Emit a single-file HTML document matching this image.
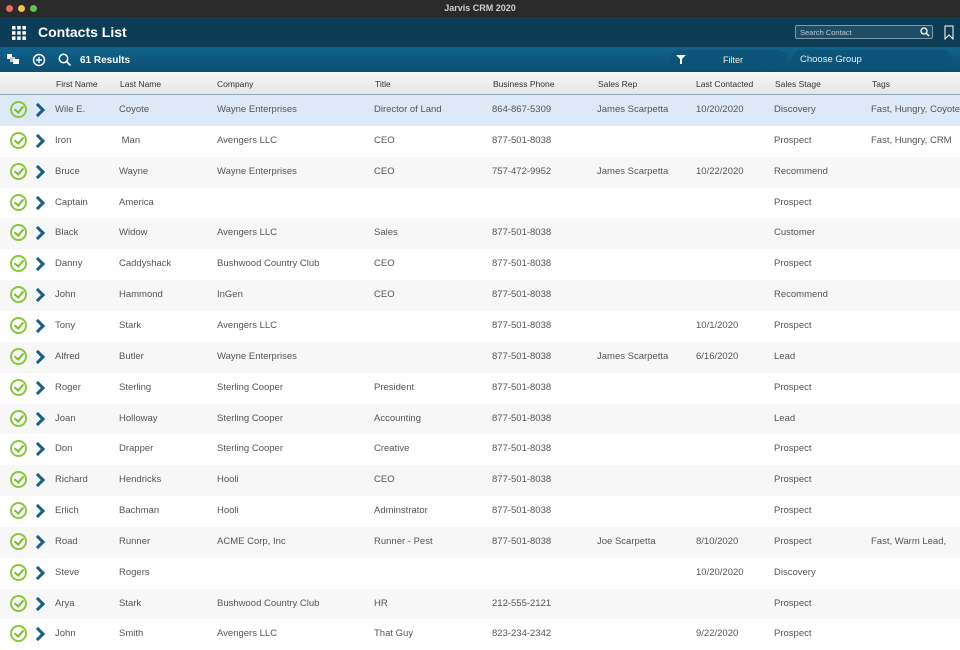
<html><head><style>
body{margin:0;width:960px;height:634px;overflow:hidden;font-family:"Liberation Sans",sans-serif;background:#fff;position:relative}
.tb{position:absolute;top:0;left:0;width:960px;height:17px;background:#2a2a2a;color:#cfcfcf;font-size:9px;font-weight:bold;text-align:center;line-height:17px}
.dot{position:absolute;top:5px;width:7px;height:7px;border-radius:50%}
.hd{position:absolute;top:17px;left:0;width:960px;height:30px;background:#0c3c56}
.tl{position:absolute;top:47px;left:0;width:960px;height:25px;background:linear-gradient(#11628a,#0b4f72)}
.ch{position:absolute;top:72px;left:0;width:960px;height:22px;background:linear-gradient(#f6f6f6,#e6e6e6);border-bottom:1px solid #9aa7b0;font-size:8.5px;color:#333}
.ch span,.r span{position:absolute}
.ch span{top:7px}
.r{position:absolute;left:0;width:960px;height:30.85px;font-size:9.5px;color:#555}
.r span{top:9px;white-space:nowrap}
.ck{position:absolute;left:10px;top:6px;width:13px;height:13px;border:2px solid #8cc63f;border-radius:50%}
.ck:after{content:"";position:absolute;left:4px;top:1px;width:4px;height:7px;border:solid #7cbb2f;border-width:0 2px 2px 0;transform:rotate(40deg)}
.cv{position:absolute;left:33px;top:10px;width:7px;height:7px;border:solid #1a5f86;border-width:3px 3px 0 0;transform:rotate(45deg)}
</style></head><body>
<div class="tb">Jarvis CRM 2020
<div class="dot" style="left:6px;background:#ed6a5e"></div><div class="dot" style="left:18px;background:#f5bf4f"></div><div class="dot" style="left:30px;background:#61c454"></div></div>
<div class="hd">
<svg style="position:absolute;left:12px;top:9px" width="14" height="14"><g fill="#fff"><rect x="0" y="0" width="3.5" height="3.5"/><rect x="5.2" y="0" width="3.5" height="3.5"/><rect x="10.4" y="0" width="3.5" height="3.5"/><rect x="0" y="5.2" width="3.5" height="3.5"/><rect x="5.2" y="5.2" width="3.5" height="3.5"/><rect x="10.4" y="5.2" width="3.5" height="3.5"/><rect x="0" y="10.4" width="3.5" height="3.5"/><rect x="5.2" y="10.4" width="3.5" height="3.5"/><rect x="10.4" y="10.4" width="3.5" height="3.5"/></g></svg>
<div style="position:absolute;left:38px;top:7px;color:#fff;font-size:14px;font-weight:bold">Contacts List</div>
<div style="position:absolute;left:795px;top:8px;width:138px;height:14px;border:1px solid #7a9cb0;background:#1f4d66;border-radius:2px;color:#b8c8d2;font-size:7.5px;line-height:13px;padding-left:4px;box-sizing:border-box">Search Contact</div>
<svg style="position:absolute;left:920px;top:10px" width="10" height="10"><circle cx="4" cy="4" r="3" fill="none" stroke="#fff" stroke-width="1.3"/><path d="M6 6L9 9" stroke="#fff" stroke-width="1.5"/></svg>
<svg style="position:absolute;left:944px;top:8px" width="10" height="15"><path d="M1 1H9V14L5 10L1 14Z" fill="none" stroke="#fff" stroke-width="1"/></svg>
</div>
<div class="tl">
<svg style="position:absolute;left:7px;top:7px" width="13" height="11"><rect x="0" y="0" width="5" height="5" fill="#fff"/><rect x="3" y="3" width="5" height="5" fill="#ccc"/><rect x="6" y="5" width="6" height="5" fill="#fff"/></svg>
<svg style="position:absolute;left:32px;top:6px" width="14" height="14"><circle cx="7" cy="7" r="5.5" fill="none" stroke="#fff" stroke-width="1.4"/><path d="M7 4V10M4 7H10" stroke="#fff" stroke-width="1.4"/></svg>
<svg style="position:absolute;left:58px;top:6px" width="14" height="14"><circle cx="5.5" cy="5.5" r="4.2" fill="none" stroke="#fff" stroke-width="1.5"/><path d="M8.5 8.5L12.5 12.5" stroke="#fff" stroke-width="1.8"/></svg>
<div style="position:absolute;left:80px;top:8px;color:#fff;font-size:10px;font-weight:bold">61 Results</div>
<div style="position:absolute;left:670px;top:3px;width:117px;height:19px;border-radius:10px;background:#0d5578"></div>
<div style="position:absolute;left:792px;top:3px;width:160px;height:19px;border-radius:10px;background:#0d5578"></div>
<svg style="position:absolute;left:676px;top:8px" width="10" height="10"><path d="M0 0H10L6 4V9H4V4Z" fill="#fff"/></svg>
<div style="position:absolute;left:723px;top:8px;color:#e8eef2;font-size:9px">Filter</div>
<div style="position:absolute;left:800px;top:7px;color:#e8eef2;font-size:9.5px">Choose Group</div>
</div>
<div class="ch"><span style="left:56px">First Name</span><span style="left:120px">Last Name</span><span style="left:217px">Company</span><span style="left:375px">Title</span><span style="left:493px">Business Phone</span><span style="left:598px">Sales Rep</span><span style="left:696px">Last Contacted</span><span style="left:775px">Sales Stage</span><span style="left:872px">Tags</span></div>
<div id="rows"></div>
<script>
var d=[["Wile E.","Coyote","Wayne Enterprises","Director of Land","864-867-5309","James Scarpetta","10/20/2020","Discovery","Fast, Hungry, Coyote"],
["Iron","&nbsp;Man","Avengers LLC","CEO","877-501-8038","","","Prospect","Fast, Hungry, CRM"],
["Bruce","Wayne","Wayne Enterprises","CEO","757-472-9952","James Scarpetta","10/22/2020","Recommend",""],
["Captain","America","","","","","","Prospect",""],
["Black","Widow","Avengers LLC","Sales","877-501-8038","","","Customer",""],
["Danny","Caddyshack","Bushwood Country Club","CEO","877-501-8038","","","Prospect",""],
["John","Hammond","InGen","CEO","877-501-8038","","","Recommend",""],
["Tony","Stark","Avengers LLC","","877-501-8038","","10/1/2020","Prospect",""],
["Alfred","Butler","Wayne Enterprises","","877-501-8038","James Scarpetta","6/16/2020","Lead",""],
["Roger","Sterling","Sterling Cooper","President","877-501-8038","","","Prospect",""],
["Joan","Holloway","Sterling Cooper","Accounting","877-501-8038","","","Lead",""],
["Don","Drapper","Sterling Cooper","Creative","877-501-8038","","","Prospect",""],
["Richard","Hendricks","Hooli","CEO","877-501-8038","","","Prospect",""],
["Erlich","Bachman","Hooli","Adminstrator","877-501-8038","","","Prospect",""],
["Road","Runner","ACME Corp, Inc","Runner - Pest","877-501-8038","Joe Scarpetta","8/10/2020","Prospect","Fast, Warm Lead,"],
["Steve","Rogers","","","","","10/20/2020","Discovery",""],
["Arya","Stark","Bushwood Country Club","HR","212-555-2121","","","Prospect",""],
["John","Smith","Avengers LLC","That Guy","823-234-2342","","9/22/2020","Prospect",""]];
var x=[55,119,217,374,492,597,696,774,871],h="";
d.forEach(function(r,i){var bg=i==0?"#dde9f7":(i%2?"#fff":"#f7f7f7");
h+='<div class="r" style="top:'+(95+i*30.85)+'px;background:'+bg+';'+(i==0?'border-bottom:1px solid #c8d6e6;':'')+'"><div class="ck"></div><div class="cv"></div>';
r.forEach(function(t,j){h+='<span style="left:'+x[j]+'px">'+t+'</span>'});h+='</div>'});
document.getElementById("rows").innerHTML=h;
</script>
</body></html>
